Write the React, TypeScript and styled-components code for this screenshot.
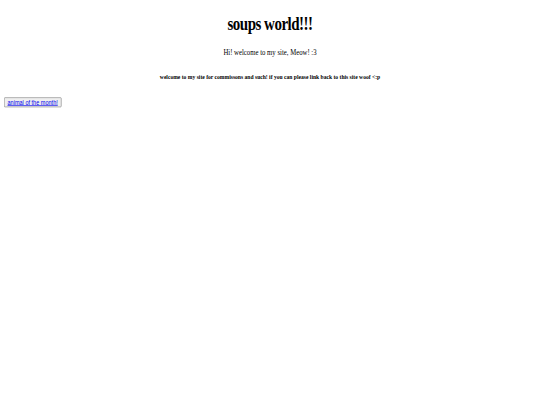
import styled, { createGlobalStyle } from "styled-components";

const GlobalStyle = createGlobalStyle`
  html, body {
    margin: 0;
    padding: 0;
    background: #ffffff;
    overflow: hidden;
  }
`;

// the shot is a wide page squeezed into the window, so the page is drawn at
// full size and scaled down as a whole
const Viewport = styled.div`
  width: 1080px;
  transform: scale(0.5, 0.62);
  transform-origin: top left;
`;

const Page = styled.main`
  display: flow-root;
  padding: 0 8px;
  font-family: "Liberation Serif", "Times New Roman", serif;
  color: #000000;
`;

const Title = styled.h1`
  margin: 21.44px 0;
  font-size: 30px;
  letter-spacing: -1px;
  font-weight: bold;
  text-align: center;
`;

const Greeting = styled.p`
  margin: 13.33px 0;
  font-size: 13.5px;
  text-align: center;
`;

const Note = styled.h6`
  margin: 25px 0;
  font-size: 11.2px;
  font-weight: bold;
  text-align: center;
`;

const Button = styled.button`
  font-family: "Liberation Sans", Arial, sans-serif;
  font-size: 11.1px;
  padding: 1px 6px;
  background: #efefef;
  border: 1px solid #767676;
  border-radius: 2px;
  cursor: pointer;
`;

const Link = styled.a`
  color: #0000ee;
  text-decoration: underline;
`;

export default function App(): JSX.Element {
  return (
    <Viewport>
      <GlobalStyle />
      <Page>
        <Title>soups world!!!</Title>
        <Greeting>Hi! welcome to my site, Meow! :3</Greeting>
        <Note>
          welcome to my site for commissons and such! if you can please link
          back to this site woof &lt;:p
        </Note>
        <Button type="button">
          <Link href="#">animal of the month!</Link>
        </Button>
      </Page>
    </Viewport>
  );
}
